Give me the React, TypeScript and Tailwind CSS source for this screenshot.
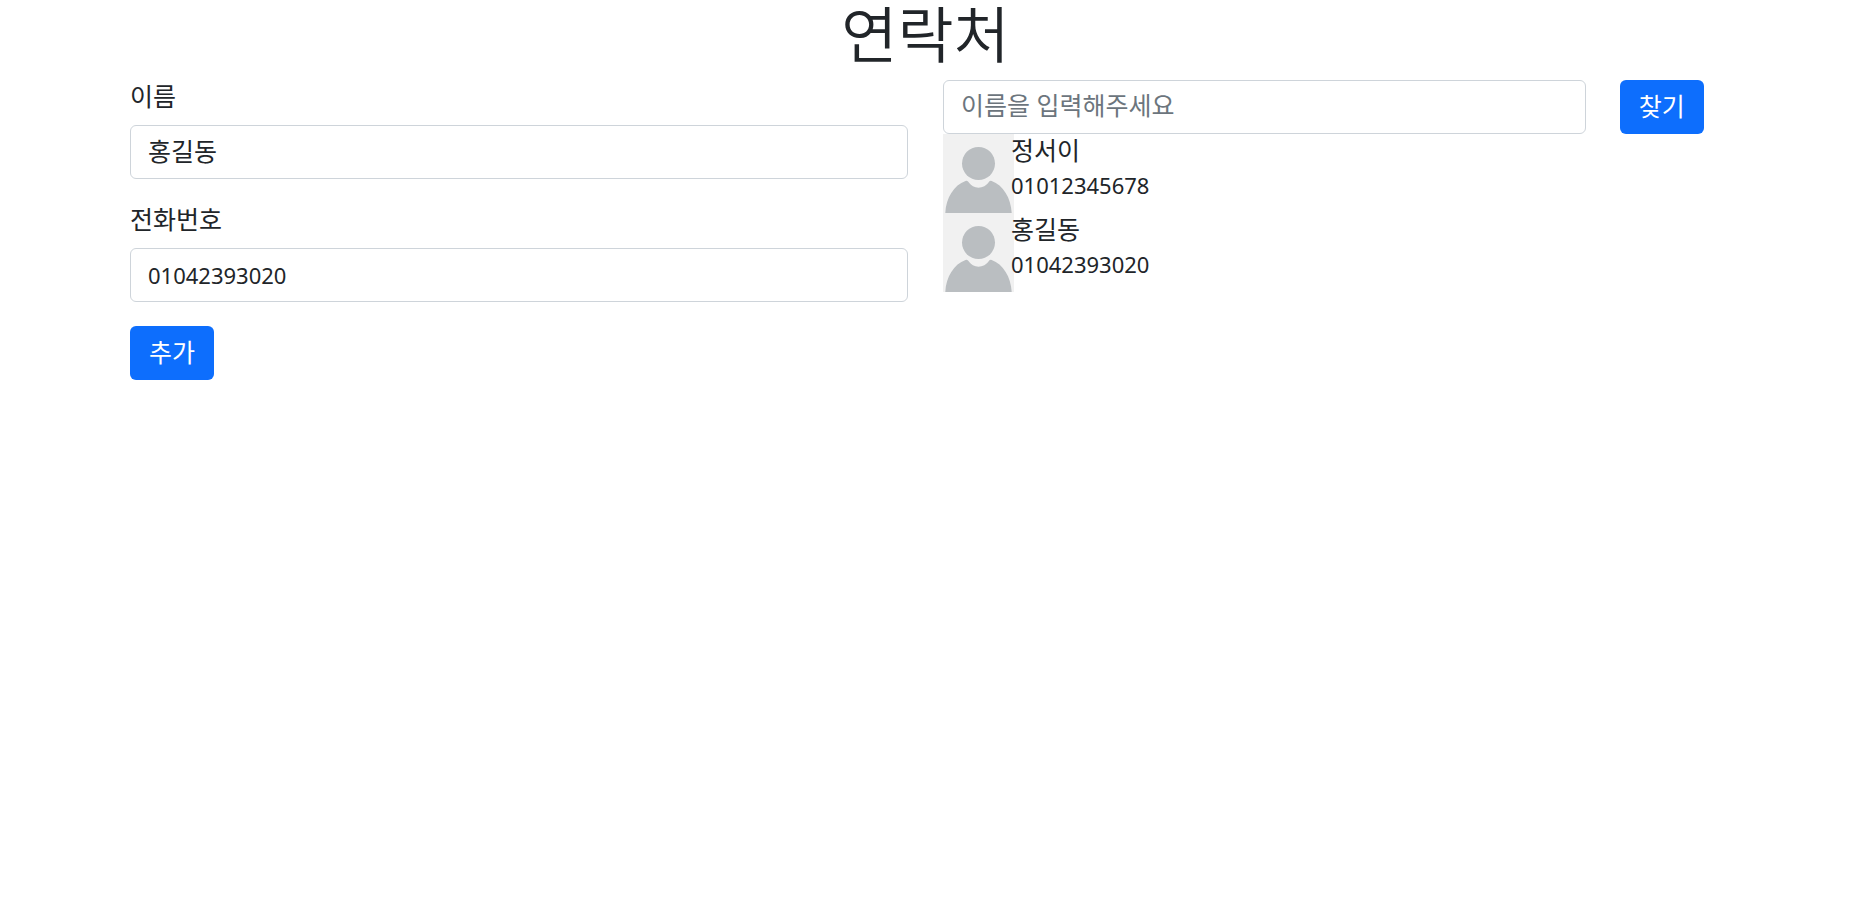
import { useState } from 'react'

type Contact = { name: string; phone: string }

const labelClass = 'mb-3 block text-[25px] leading-[33px]'
const inputClass =
    'block w-full h-[54px] rounded-md border border-[#ced4da] bg-white px-[17px] text-[#212529] placeholder:text-[#6c757d] placeholder:opacity-100 focus:outline-none focus:border-[#86b7fe]'
const buttonClass = 'h-[54px] rounded-md bg-[#0d6efd] px-[19px] text-[25px] text-white hover:bg-[#0b5ed7]'

function Avatar() {
    return (
        <svg className="block w-[71px] h-[79px] max-w-none" viewBox="0 0 71 79" aria-hidden="true">
            <rect width="71" height="79" fill="#f1f1f1" />
            <circle cx="35.5" cy="29.5" r="16.5" fill="#babec1" />
            <path
                d="M2.3 79C3 64 11 51 22.5 47Q24 46.3 25 47.6C28 51.8 31.5 53.7 35.5 53.7S43.5 51.8 46.2 47.6Q47.2 46.3 48.7 47C60 51 68 64 68.7 79Z"
                fill="#babec1"
            />
        </svg>
    )
}

function ContactRow({ contact }: { contact: Contact }) {
    return (
        <li className="flex">
            <div className="w-[68px] h-[79px] shrink-0">
                <Avatar />
            </div>
            <div className="relative">
                <p className="text-[25px] leading-[33px]">{contact.name}</p>
                <p className="leading-9">{contact.phone}</p>
            </div>
        </li>
    )
}

export default function App() {
    const [name, setName] = useState('홍길동')
    const [phone, setPhone] = useState('01042393020')
    const [keyword, setKeyword] = useState('')
    const [filter, setFilter] = useState('')
    const [contacts, setContacts] = useState<Contact[]>([
        { name: '정서이', phone: '01012345678' },
        { name: '홍길동', phone: '01042393020' },
    ])

    const handleAdd = (e: React.FormEvent) => {
        e.preventDefault()
        if (!name.trim()) return
        setContacts([...contacts, { name, phone }])
    }

    const handleSearch = (e: React.FormEvent) => {
        e.preventDefault()
        setFilter(keyword.trim())
    }

    return (
        <div className="min-h-screen bg-white text-[22px] text-[#212529] font-['Noto_Sans','Noto_Sans_CJK_KR',sans-serif]">
            <div className="mx-auto w-full max-w-[1625px] px-[17px]">
                <h1 className="mb-4 text-center font-['Noto_Sans_CJK_KR',sans-serif] text-[61px] leading-[64px] font-[350]">
                    연락처
                </h1>
                <div className="grid grid-cols-1 md:grid-cols-2 gap-[35px] items-start">
                    <form onSubmit={handleAdd}>
                        <div className="mb-6">
                            <label htmlFor="name" className={labelClass}>
                                이름
                            </label>
                            <input
                                id="name"
                                type="text"
                                value={name}
                                onChange={(e) => setName(e.target.value)}
                                className={`${inputClass} pb-1 text-[25px]`}
                            />
                        </div>
                        <div className="mb-6">
                            <label htmlFor="phone" className={labelClass}>
                                전화번호
                            </label>
                            <input
                                id="phone"
                                type="text"
                                value={phone}
                                onChange={(e) => setPhone(e.target.value)}
                                className={`${inputClass} text-[22px]`}
                            />
                        </div>
                        <button type="submit" className={buttonClass}>
                            추가
                        </button>
                    </form>
                    <div>
                        <form onSubmit={handleSearch} className="grid grid-cols-12 gap-[34px]">
                            <input
                                type="text"
                                aria-label="이름"
                                placeholder="이름을 입력해주세요"
                                value={keyword}
                                onChange={(e) => setKeyword(e.target.value)}
                                className={`${inputClass} col-span-10 pb-1 text-[25px]`}
                            />
                            <button type="submit" className={`${buttonClass} col-span-2 justify-self-start`}>
                                찾기
                            </button>
                        </form>
                        <ul>
                            {contacts
                                .filter((c) => c.name.includes(filter))
                                .map((c, i) => (
                                    <ContactRow key={i} contact={c} />
                                ))}
                        </ul>
                    </div>
                </div>
            </div>
        </div>
    )
}
